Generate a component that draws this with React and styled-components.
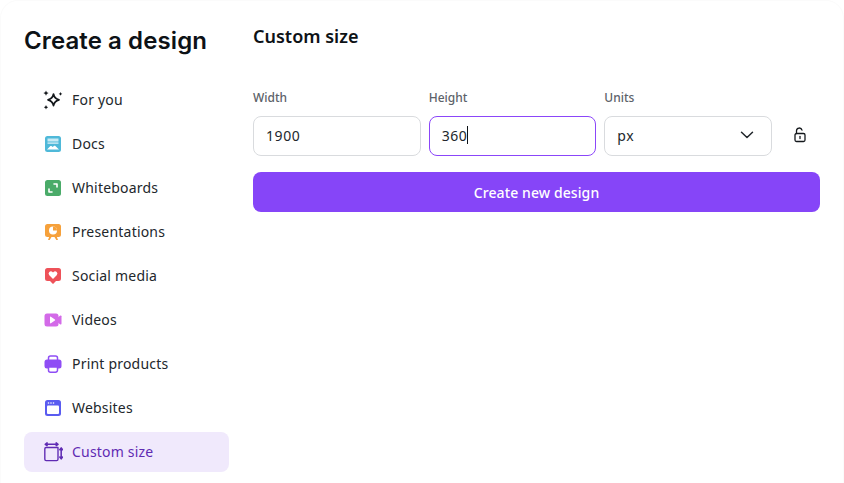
import React from "react";
import styled, { createGlobalStyle } from "styled-components";

const GlobalStyle = createGlobalStyle`
  html, body { margin: 0; padding: 0; background: #fff; }
  body { font-family: "Noto Sans", "Open Sans", sans-serif; color: #0d1216; }
`;

const Dialog = styled.div`
  width: 844px;
  height: 483px;
  display: flex;
  box-sizing: border-box;
  background: #fff;
  border: 1px solid #fbfbfb;
  border-bottom: 0;
  border-radius: 18px 18px 0 0;
  overflow: hidden;
`;

const Sidebar = styled.aside`
  width: 252px;
  flex: none;
  box-sizing: border-box;
  padding: 23px 24px 0 23px;
`;

const Title = styled.h1`
  margin: 0 0 20px;
  height: 36px;
  font-family: "Inter", sans-serif;
  font-size: 24px;
  line-height: 34px;
  font-weight: 600;
  letter-spacing: 0.1px;
  white-space: nowrap;
  color: #0d1216;
`;

const Nav = styled.nav`
  display: flex;
  flex-direction: column;
  gap: 4px;
`;

const NavItem = styled.a`
  display: flex;
  align-items: center;
  gap: 9.5px;
  height: 40px;
  padding: 0 8px 0 18.5px;
  border-radius: 8px;
  font-size: 14px;
  letter-spacing: 0.2px;
  color: ${(p) => (p.$active ? "#5f2bb3" : "#22272c")};
  background: ${(p) => (p.$active ? "#f0e9fc" : "transparent")};
`;

const NavLabel = styled.span`
  padding-bottom: 2px;
`;

const IconBox = styled.span`
  width: 20px;
  height: 20px;
  display: flex;
  align-items: center;
  justify-content: center;
  flex: none;
`;

const Main = styled.main`
  flex: 1;
  box-sizing: border-box;
  padding: 23px 23px 0 0;
`;

const Heading = styled.h2`
  margin: 0 0 41px;
  font-size: 18px;
  line-height: 24px;
  font-weight: 600;
  color: #0d1216;
`;

const FieldRow = styled.div`
  display: grid;
  grid-template-columns: repeat(3, 1fr) 40px;
  column-gap: 8px;
  align-items: end;
`;

const Field = styled.label`
  display: flex;
  flex-direction: column;
  gap: 9px;
`;

const FieldLabel = styled.span`
  font-size: 12px;
  line-height: 18px;
  font-weight: 500;
  color: #5c6269;
`;

const InputBox = styled.div`
  height: 40px;
  box-sizing: border-box;
  display: flex;
  align-items: center;
  padding: 0 12px 2px;
  border: 1px solid ${(p) => (p.$focused ? "#8b46f9" : "#d9dbde")};
  border-radius: 8px;
  font-size: 14px;
  letter-spacing: 0.6px;
  color: #22272c;
  background: #fff;
`;

const Caret = styled.span`
  width: 1px;
  height: 18px;
  background: #0d1216;
`;

const Chevron = styled.svg`
  margin-left: auto;
  margin-right: 5px;
`;

const LockButton = styled.div`
  height: 38px;
  padding-bottom: 2px;
  display: flex;
  align-items: center;
  justify-content: center;
`;

const CreateButton = styled.button`
  display: block;
  width: 100%;
  height: 40px;
  margin-top: 16px;
  border: 0;
  border-radius: 8px;
  background: #8645f8;
  color: #fff;
  font-family: inherit;
  font-size: 14px;
  font-weight: 500;
  letter-spacing: 0.1px;
`;

const Sparkle = () => (
  <svg width="20" height="20" viewBox="0 0 20 20" fill="#14181c">
    <path d="M10.500 4c.7 3.300 2.200 5 5.500 5.800-3.300.8-4.800 2.500-5.500 5.800-.7-3.300-2.200-5-5.500-5.800 3.300-.8 4.800-2.500 5.500-5.800z" fill="none" stroke="#14181c" strokeWidth="1.700" strokeLinejoin="round" />
    <path d="M3 .5l.8 1.800 1.800.8-1.800.8L3 5.700l-.8-1.800L.4 3.100l1.800-.8zM17.500 2l.6 1.300 1.300.6-1.300.6-.6 1.300-.6-1.300-1.300-.6 1.300-.6zM3 15l.7 1.500 1.500.7-1.500.7L3 19.400l-.7-1.500-1.500-.7 1.500-.7z" />
  </svg>
);

const Docs = () => (
  <svg width="18" height="18" viewBox="0 0 18 18">
    <rect x="1" y="1" width="16" height="16" rx="2.500" fill="#4fb9d9" />
    <rect x="3.500" y="3.500" width="11" height="3" fill="#c8ebf5" />
    <rect x="3.500" y="7.500" width="11" height="1.200" fill="#e6f6fb" />
    <path d="M3 14.500l3.400-3.400c.3-.3.6-.3 1 0l1.300.9 1.500-1.200c.3-.2.600-.2.900 0l3.900 3.700z" fill="#fff" />
  </svg>
);

const Board = () => (
  <svg width="18" height="18" viewBox="0 0 18 18">
    <rect x="1" y="1" width="16" height="16" rx="2.500" fill="#4aab69" />
    <path d="M10 5h3v3M8 13H5v-3" fill="none" stroke="#fff" strokeWidth="1.600" strokeLinecap="round" strokeLinejoin="round" />
  </svg>
);

const Presentation = () => (
  <svg width="18" height="18" viewBox="0 0 18 18">
    <path d="M5.500 13L4 17h1.700L7.500 14h3l1.800 3H14l-1.500-4z" fill="#f6a13b" />
    <rect x="1" y="1" width="16" height="13" rx="2.500" fill="#f6a13b" />
    <circle cx="9" cy="7.500" r="4" fill="#fff" />
    <path d="M9 7.500V3.500a4 4 0 0 1 4 4z" fill="#f6a13b" />
  </svg>
);

const Social = () => (
  <svg width="18" height="18" viewBox="0 0 18 18">
    <path d="M3.500 1h11A2.500 2.500 0 0 1 17 3.500v8a2.500 2.500 0 0 1-2.500 2.500H12l-3 3-3-3H3.500A2.500 2.500 0 0 1 1 11.500v-8A2.500 2.500 0 0 1 3.500 1z" fill="#ee5259" />
    <path d="M9 12L5.300 8.200a2.300 2.300 0 0 1 3.200-3.300l.5.500.5-.5a2.300 2.300 0 0 1 3.200 3.300z" fill="#fff" />
  </svg>
);

const Video = () => (
  <svg width="18" height="18" viewBox="0 0 18 18">
    <rect x="0.500" y="2.500" width="14" height="13" rx="2.500" fill="#d36ae8" />
    <path d="M13 7l3.400-2.400c.5-.3 1.100 0 1.100.6v7.600c0 .6-.6.9-1.100.6L13 11z" fill="#d36ae8" />
    <path d="M6 6.200c0-.5.500-.8.900-.5l4 2.800c.4.300.4.800 0 1l-4 2.800c-.4.300-.9 0-.9-.5z" fill="#fff" />
  </svg>
);

const Printer = () => (
  <svg width="18" height="18" viewBox="0 0 18 18">
    <path d="M4.500 5V3a2 2 0 0 1 2-2h5a2 2 0 0 1 2 2v2" fill="#fff" stroke="#8f4df5" strokeWidth="1.500" />
    <rect x="0.500" y="4.500" width="17" height="9" rx="2.500" fill="#8f4df5" />
    <path d="M4.500 12h9v3.200a2 2 0 0 1-2 2h-5a2 2 0 0 1-2-2z" fill="#fff" stroke="#8f4df5" strokeWidth="1.500" />
  </svg>
);

const Website = () => (
  <svg width="18" height="18" viewBox="0 0 18 18">
    <rect x="1" y="1" width="16" height="16" rx="2.500" fill="#5a5cf0" />
    <rect x="3" y="6.500" width="12" height="8.500" rx="1" fill="#fff" />
    <circle cx="4.500" cy="4" r=".8" fill="#fff" />
    <circle cx="7" cy="4" r=".8" fill="#fff" />
    <circle cx="9.500" cy="4" r=".8" fill="#fff" />
  </svg>
);

const Custom = () => (
  <svg width="20" height="20" viewBox="0 0 22 22" fill="none" stroke="#5f2bb3" strokeWidth="1.500" strokeLinecap="round" strokeLinejoin="round">
    <path d="M16.500 6H3.500A1.500 1.500 0 0 0 2 7.500V19a1.500 1.500 0 0 0 1.500 1.500H15a1.500 1.500 0 0 0 1.500-1.500V6" />
    <path d="M2.500 2.500h14M4.500 1L2.500 2.500 4.500 4M14.500 1l2 1.500-2 1.500" strokeWidth="1.700" />
    <path d="M20 6.500v12M18.500 8.500L20 6.500l1.500 2M18.500 16.500l1.500 2 1.500-2" strokeWidth="1.700" />
  </svg>
);

const Lock = () => (
  <svg width="14" height="16" viewBox="0 0 14 16" fill="none" stroke="#14181c" strokeWidth="1.300">
    <path d="M3.500 6.500V3.800a2.800 2.800 0 0 1 5.500-.7" strokeLinecap="round" />
    <rect x="2" y="6.500" width="10" height="8" rx="1.500" />
    <path d="M7 9.500v2" strokeLinecap="round" />
  </svg>
);

const items = [
  { label: "For you", icon: <Sparkle /> },
  { label: "Docs", icon: <Docs /> },
  { label: "Whiteboards", icon: <Board /> },
  { label: "Presentations", icon: <Presentation /> },
  { label: "Social media", icon: <Social /> },
  { label: "Videos", icon: <Video /> },
  { label: "Print products", icon: <Printer /> },
  { label: "Websites", icon: <Website /> },
  { label: "Custom size", icon: <Custom />, active: true },
];

const App = () => (
  <>
    <GlobalStyle />
    <Dialog>
      <Sidebar>
        <Title>Create a design</Title>
        <Nav>
          {items.map((item) => (
            <NavItem key={item.label} $active={item.active}>
              <IconBox>{item.icon}</IconBox>
              <NavLabel>{item.label}</NavLabel>
            </NavItem>
          ))}
        </Nav>
      </Sidebar>
      <Main>
        <Heading>Custom size</Heading>
        <FieldRow>
          <Field>
            <FieldLabel>Width</FieldLabel>
            <InputBox>1900</InputBox>
          </Field>
          <Field>
            <FieldLabel>Height</FieldLabel>
            <InputBox $focused>
              360
              <Caret />
            </InputBox>
          </Field>
          <Field>
            <FieldLabel>Units</FieldLabel>
            <InputBox>
              px
              <Chevron width="14" height="8" viewBox="0 0 14 8" fill="none" stroke="#22272c" strokeWidth="1.500" strokeLinecap="round" strokeLinejoin="round">
                <path d="M1.500 1.200L7 6.500l5.500-5.300" />
              </Chevron>
            </InputBox>
          </Field>
          <LockButton>
            <Lock />
          </LockButton>
        </FieldRow>
        <CreateButton>Create new design</CreateButton>
      </Main>
    </Dialog>
  </>
);

export default App;
